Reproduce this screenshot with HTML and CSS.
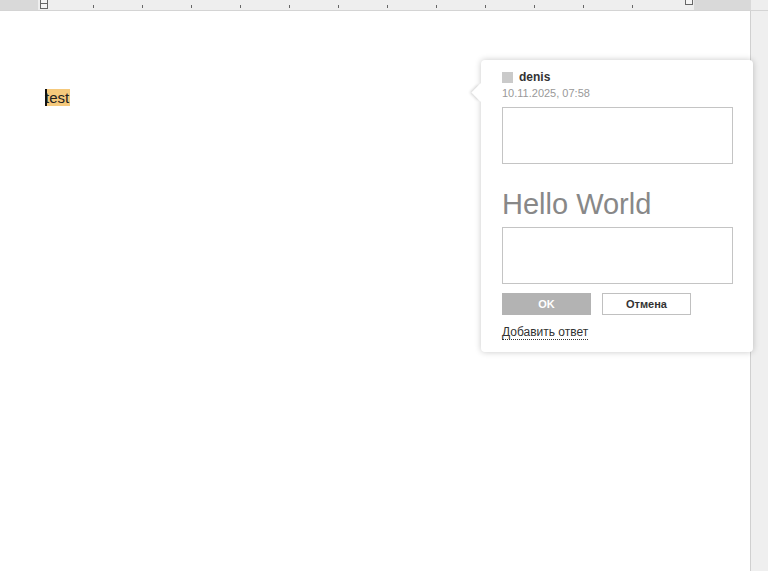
FILE: index.html
```html
<!DOCTYPE html>
<html>
<head>
<meta charset="utf-8">
<link rel="stylesheet" href="styles.css">
</head>
<body>
<div class="app">
  <div class="ruler">
    <div class="ruler-left"></div>
    <div class="ruler-mid">
      <span class="tick"></span><span class="tick"></span><span class="tick"></span><span class="tick"></span><span class="tick"></span><span class="tick"></span><span class="tick"></span><span class="tick"></span><span class="tick"></span><span class="tick"></span><span class="tick"></span><span class="tick"></span>
      <span class="marker marker-left"></span>
      <span class="marker marker-right"></span>
    </div>
    <div class="ruler-right"></div>
    <div class="ruler-gutter"></div>
  </div>
  <div class="workspace">
    <div class="page">
      <p class="line"><span class="hl"><span class="caret"></span>test</span></p>
    </div>
    <div class="gutter"></div>
  </div>

  <div class="comment">
    <span class="arrow"></span>
    <div class="head">
      <span class="avatar"></span>
      <span class="user">denis</span>
    </div>
    <div class="date">10.11.2025, 07:58</div>
    <div class="box box-first"></div>
    <div class="hello">Hello World</div>
    <div class="box"></div>
    <div class="buttons">
      <button class="btn btn-ok">OK</button>
      <button class="btn btn-cancel">Отмена</button>
    </div>
    <a class="reply">Добавить ответ</a>
  </div>
</div>
</body>
</html>
```

FILE: styles.css
```css
html, body {
  margin: 0;
  padding: 0;
  width: 768px;
  height: 571px;
  overflow: hidden;
  background: #ffffff;
  font-family: "Liberation Sans", Arial, sans-serif;
}

.app {
  position: relative;
  width: 768px;
  height: 571px;
  display: flex;
  flex-direction: column;
}

.ruler {
  height: 10px;
  display: flex;
  border-bottom: 1px solid #d4d4d4;
  background: #ececec;
  flex: none;
}

.ruler-left {
  width: 38px;
  background: #d9d9d9;
}

.ruler-mid {
  position: relative;
  width: 656px;
  background: #eeeeee;
}

.ruler-right {
  width: 57px;
  background: #d9d9d9;
}

.ruler-gutter {
  flex: 1;
  background: #eeeeee;
}

.tick {
  position: absolute;
  top: 5px;
  width: 1px;
  height: 3px;
  background: #666;
}
.tick:nth-child(1) { left: 55px; }
.tick:nth-child(2) { left: 104px; }
.tick:nth-child(3) { left: 153px; }
.tick:nth-child(4) { left: 202px; }
.tick:nth-child(5) { left: 251px; }
.tick:nth-child(6) { left: 300px; }
.tick:nth-child(7) { left: 349px; }
.tick:nth-child(8) { left: 398px; }
.tick:nth-child(9) { left: 447px; }
.tick:nth-child(10) { left: 496px; }
.tick:nth-child(11) { left: 545px; }
.tick:nth-child(12) { left: 594px; }

.marker {
  position: absolute;
  width: 8px;
  height: 9px;
  border: 1px solid #666;
  box-sizing: border-box;
  background: #f4f4f4;
}
.marker-left {
  left: 2px;
  top: 0;
  height: 9px;
  border-top: none;
  background: linear-gradient(#f4f4f4 0 3px, #666 3px 4px, #f4f4f4 4px);
}
.marker-right {
  left: 647px;
  top: -4px;
  border-top: none;
}

.workspace {
  flex: 1;
  display: flex;
}

.page {
  width: 751px;
  background: #ffffff;
  border-right: 1px solid #d0d0d0;
  box-sizing: border-box;
  padding-top: 78px;
  padding-left: 45px;
}

.gutter {
  flex: 1;
  background: #efefef;
}

.line {
  margin: 0;
  font-size: 15px;
  line-height: 17px;
  color: #222;
}

.hl {
  position: relative;
  background: #f5c97c;
  padding: 0 1px 0 0;
}

.caret {
  position: absolute;
  left: 0;
  top: 0;
  width: 2px;
  height: 17px;
  background: #111;
}

.comment {
  position: absolute;
  left: 481px;
  top: 60px;
  width: 272px;
  height: 292px;
  box-sizing: border-box;
  padding: 10px 21px 0 21px;
  background: #fff;
  border-radius: 4px;
  box-shadow: 0 0 6px rgba(0, 0, 0, 0.22);
}

.arrow {
  position: absolute;
  left: -7px;
  top: 26px;
  width: 13px;
  height: 13px;
  background: #fff;
  transform: rotate(45deg);
  box-shadow: -2px 2px 3px -1px rgba(0, 0, 0, 0.18);
}

.head {
  position: relative;
  display: flex;
  align-items: center;
  height: 14px;
}

.avatar {
  width: 11px;
  height: 11px;
  background: #cacaca;
  margin-right: 6px;
}

.user {
  font-size: 12px;
  font-weight: bold;
  color: #333;
}

.date {
  margin-top: 3px;
  font-size: 11px;
  line-height: 13px;
  color: #999999;
}

.box {
  margin-top: 10px;
  height: 57px;
  border: 1px solid #c4c4c4;
  box-sizing: border-box;
  width: 231px;
}

.box-first {
  margin-top: 7px;
}

.hello {
  margin-top: 23px;
  font-size: 29px;
  line-height: 34px;
  color: #888;
  margin-bottom: -4px;
}

.buttons {
  display: flex;
  gap: 11px;
  margin-top: 9px;
}

.btn {
  width: 89px;
  height: 22px;
  box-sizing: border-box;
  font-family: "Liberation Sans", Arial, sans-serif;
  font-size: 11px;
  font-weight: bold;
  padding: 0;
}

.btn-ok {
  background: #b3b3b3;
  color: #fff;
  border: none;
}

.btn-cancel {
  background: #fff;
  color: #333;
  border: 1px solid #c0c0c0;
}

.reply {
  display: inline-block;
  margin-top: 10px;
  font-size: 12px;
  line-height: 14px;
  color: #333;
  border-bottom: 1px dotted #333;
}
```
